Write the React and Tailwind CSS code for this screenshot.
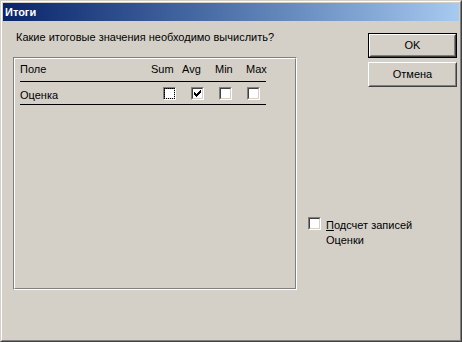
import React from "react";

function Check({ checked, focus }) {
  return (
    <div className="w-[13px] h-[13px] border-t border-l border-t-[#808080] border-l-[#808080] border-b border-r border-b-white border-r-white">
      <div className="w-[11px] h-[11px] border-t border-l border-t-[#404040] border-l-[#404040] border-b border-r border-b-[#d4d0c8] border-r-[#d4d0c8] bg-white relative">
        {focus && (
          <div className="absolute left-[-1px] top-[-1px] w-[11px] h-[11px] border border-dotted border-black" />
        )}
        {checked && (
          <svg width="7" height="7" viewBox="0 0 7 7" className="absolute left-[1px] top-[1px]" shapeRendering="crispEdges">
            <rect x="0" y="2" width="1" height="3" fill="#000" />
            <rect x="1" y="3" width="1" height="3" fill="#000" />
            <rect x="2" y="4" width="1" height="3" fill="#000" />
            <rect x="3" y="3" width="1" height="3" fill="#000" />
            <rect x="4" y="2" width="1" height="3" fill="#000" />
            <rect x="5" y="1" width="1" height="3" fill="#000" />
            <rect x="6" y="0" width="1" height="3" fill="#000" />
          </svg>
        )}
      </div>
    </div>
  );
}

function Button({ children, isDefault }) {
  const inner = (
    <div className="flex-1 flex border-t border-l border-t-white border-l-white border-b border-r border-b-[#404040] border-r-[#404040]">
      <div className="flex-1 flex items-center justify-center border-t border-l border-t-[#d4d0c8] border-l-[#d4d0c8] border-b border-r border-b-[#808080] border-r-[#808080] text-black">
        {children}
      </div>
    </div>
  );
  if (isDefault) {
    return <div className="w-[89px] h-[25px] flex border border-black">{inner}</div>;
  }
  return <div className="w-[89px] h-[25px] flex">{inner}</div>;
}

export default function App() {
  return (
    <div
      className="w-[462px] h-[342px] bg-[#d4d0c8] border-t border-l border-t-[#d4d0c8] border-l-[#d4d0c8] border-b border-r border-b-[#404040] border-r-[#404040] text-[11px] leading-[13px] text-black"
      style={{ fontFamily: '"Liberation Sans", Arial, sans-serif' }}
    >
      <div className="w-full h-full flex flex-col p-px border-t border-l border-t-white border-l-white border-b border-r border-b-[#808080] border-r-[#808080]">
        <div className="h-[18px] flex items-center pl-[2px] bg-gradient-to-r from-[#0a246a] to-[#a6caf0] text-white font-bold">
          Итоги
        </div>
        <div className="flex-1 flex">
          <div className="ml-[10px] w-[284px] flex flex-col">
            <div className="mt-[10px] ml-[3px] h-[13px]">Какие итоговые значения необходимо вычислить?</div>
            <div className="mt-[13px] h-[233px] flex border-t border-l border-t-[#808080] border-l-[#808080] border-b border-r border-b-white border-r-white">
              <div className="flex-1 border-t border-l border-t-white border-l-white border-b border-r border-b-[#808080] border-r-[#808080] pl-[5px] pt-[4px]">
                <div className="w-[246px]">
                  <div className="grid grid-cols-[131px_31px_33px_31px_20px] h-[13px]">
                    <span>Поле</span>
                    <span>Sum</span>
                    <span>Avg</span>
                    <span>Min</span>
                    <span>Max</span>
                  </div>
                  <div className="mt-[5px] h-px bg-black" />
                  <div className="grid grid-cols-[131px_31px_33px_31px_20px] h-[22px]">
                    <span className="mt-[7px]">Оценка</span>
                    <div className="mt-[5px] ml-[12px]"><Check focus /></div>
                    <div className="mt-[5px] ml-[9px]"><Check checked /></div>
                    <div className="mt-[5px] ml-[4px]"><Check /></div>
                    <div className="mt-[5px] ml-[1px]"><Check /></div>
                  </div>
                  <div className="h-px bg-black" />
                </div>
              </div>
            </div>
          </div>
          <div className="flex-1 flex flex-col">
            <div className="self-end mr-[2px] mt-[12px] flex flex-col gap-[4px]">
              <Button isDefault>OK</Button>
              <Button>Отмена</Button>
            </div>
            <div className="mt-[130px] ml-[11px] flex items-start">
              <Check />
              <div className="ml-[5px] mt-[1px] leading-[15px]">
                <div><span className="underline">П</span>одсчет записей</div>
                <div>Оценки</div>
              </div>
            </div>
          </div>
        </div>
      </div>
    </div>
  );
}
